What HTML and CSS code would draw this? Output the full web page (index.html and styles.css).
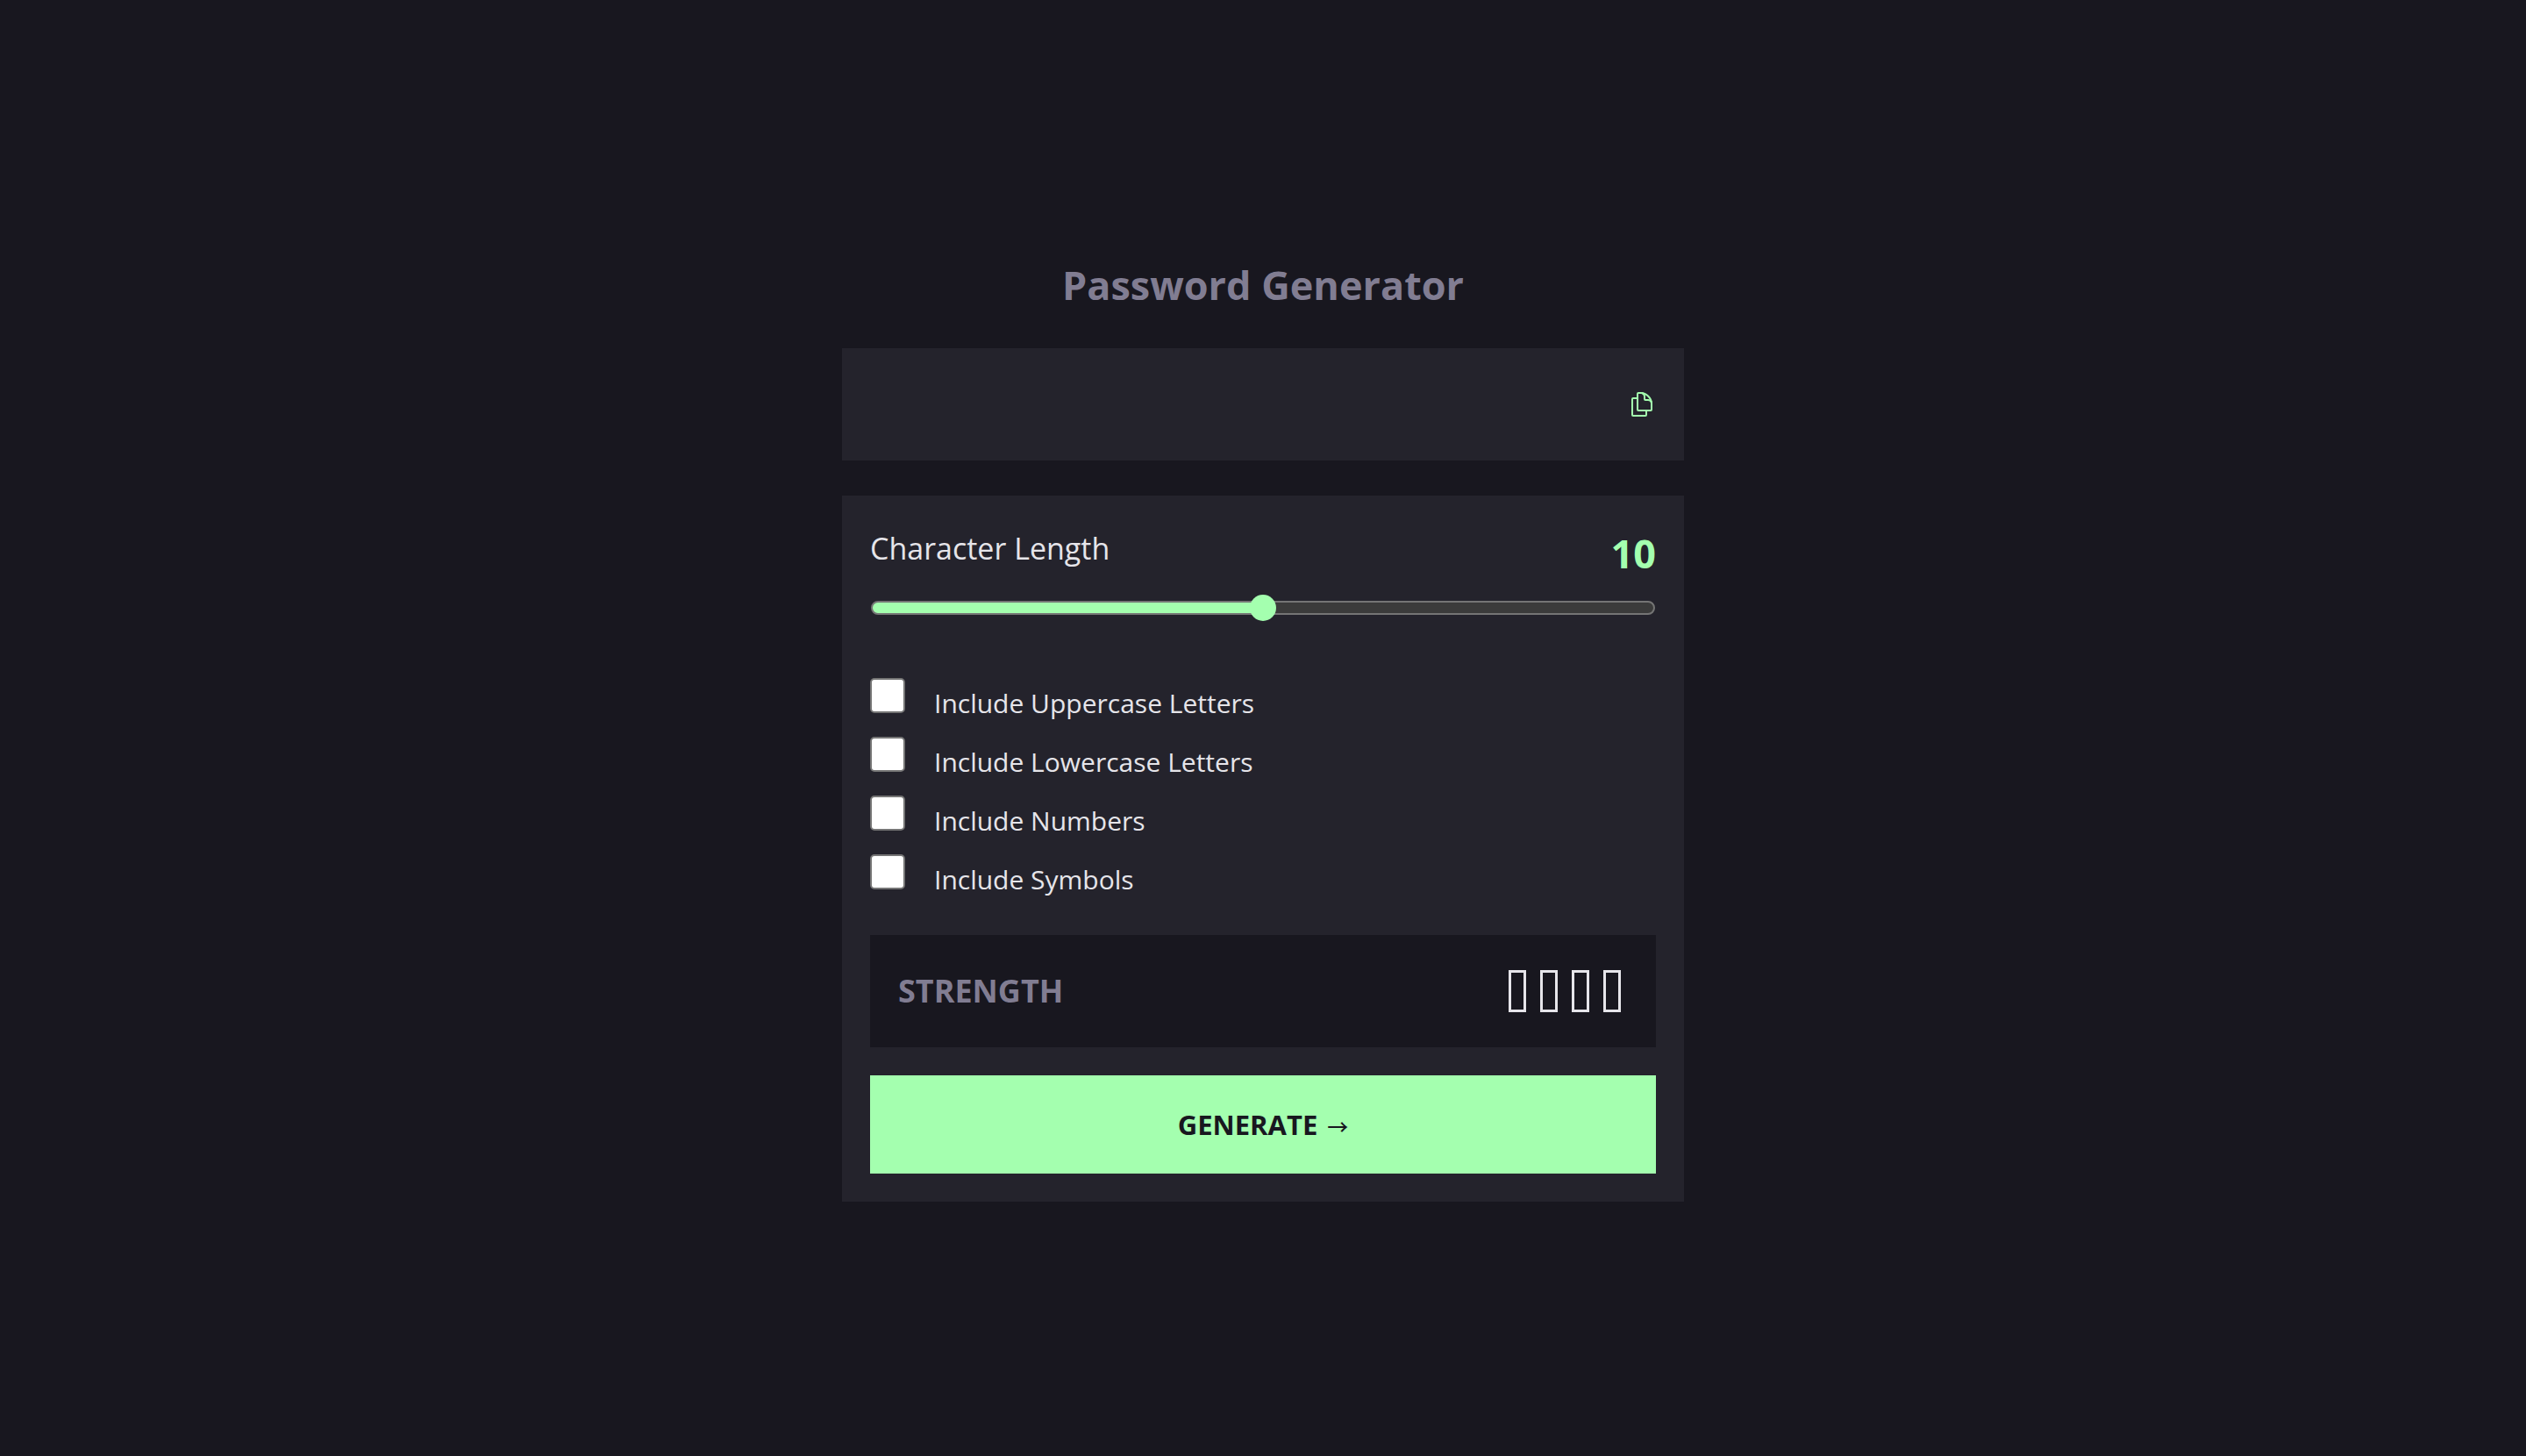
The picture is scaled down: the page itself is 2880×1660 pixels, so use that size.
FILE: index.html
```html
<!DOCTYPE html>
<html lang="en">
<head>
<meta charset="utf-8">
<meta name="viewport" content="width=device-width, initial-scale=1">
<title>Password Generator</title>
<link rel="stylesheet" href="styles.css">
</head>
<body>
<main class="generator">
  <h1 class="title">Password Generator</h1>
  <div class="output">
    <input class="password" type="text" aria-label="Generated password" readonly>
    <button class="copy" type="button" aria-label="Copy password">
      <svg class="copy-icon" viewBox="0 0 24 28" fill="none" stroke="currentColor" stroke-width="2" stroke-linejoin="round" aria-hidden="true">
        <path d="M7 7H2Q1 7 1 8V26Q1 27 2 27H16Q17 27 17 26V21"/>
        <path d="M8 1H11C17 1 23 7 23 13V20Q23 21 22 21H8Q7 21 7 20V2Q7 1 8 1Z"/>
        <path d="M12 1Q15 2 15 5V8Q15 9 16 9H19Q22 9 23 12"/>
      </svg>
    </button>
  </div>
  <form class="card">
    <div class="length-row">
      <label class="length-label" for="length">Character Length</label>
      <output class="length-value" for="length">10</output>
    </div>
    <input class="slider" id="length" type="range" min="0" max="20" value="10">
    <div class="options">
      <label class="option"><input class="tick" type="checkbox"><span class="option-text">Include Uppercase Letters</span></label>
      <label class="option"><input class="tick" type="checkbox"><span class="option-text">Include Lowercase Letters</span></label>
      <label class="option"><input class="tick" type="checkbox"><span class="option-text">Include Numbers</span></label>
      <label class="option"><input class="tick" type="checkbox"><span class="option-text">Include Symbols</span></label>
    </div>
    <div class="strength">
      <span class="strength-label">STRENGTH</span>
      <div class="bars"><span class="bar"></span><span class="bar"></span><span class="bar"></span><span class="bar"></span></div>
    </div>
    <button class="generate" type="button">GENERATE <span class="arrow">→</span></button>
  </form>
</main>
</body>
</html>
```
FILE: styles.css
```css
:root {
  --page: #18171f;
  --panel: #24232c;
  --muted: #817d92;
  --text: #e6e5ea;
  --accent: #a4ffaf;
}

* {
  box-sizing: border-box;
}

body {
  margin: 0;
  min-height: 100vh;
  display: flex;
  align-items: center;
  justify-content: center;
  background: var(--page);
  color: var(--text);
  font-family: "Segoe UI", "Open Sans", sans-serif;
}

.generator {
  width: 100%;
  max-width: 960px;
}

.title {
  margin: 0 0 38px;
  color: var(--muted);
  font-size: 45px;
  line-height: 68px;
  font-weight: 700;
  text-align: center;
}

.output {
  display: flex;
  align-items: center;
  height: 128px;
  margin-bottom: 40px;
  padding: 0 36px 0 32px;
  background: var(--panel);
}

.password {
  flex: 1;
  min-width: 0;
  border: 0;
  background: transparent;
  color: inherit;
  font: inherit;
  font-size: 36px;
}

.copy {
  display: flex;
  padding: 0;
  border: 0;
  background: none;
  color: var(--accent);
}

.copy-icon {
  width: 24px;
  height: 28px;
}

.card {
  padding: 32px;
  background: var(--panel);
}

.length-row {
  display: flex;
  justify-content: space-between;
  height: 72px;
}

.length-label {
  font-size: 34px;
  line-height: 56px;
}

.length-value {
  color: var(--accent);
  font-size: 45px;
  line-height: 68px;
  font-weight: 700;
}

.slider {
  -webkit-appearance: none;
  appearance: none;
  display: block;
  width: 100%;
  height: 32px;
  margin: 8px 0 60px;
  padding: 0 1px;
  background: transparent;
}

.slider::-webkit-slider-runnable-track {
  height: 16px;
  border: 2px solid #757575;
  border-radius: 8px;
  background: linear-gradient(to right, var(--accent) 50%, #3b3b3b 50%);
}

.slider::-webkit-slider-thumb {
  -webkit-appearance: none;
  appearance: none;
  width: 30px;
  height: 30px;
  margin-top: -9px;
  border-radius: 50%;
  background: var(--accent);
}

.options {
  display: grid;
  gap: 11px;
  margin-bottom: 40px;
}

.option {
  display: flex;
  gap: 33px;
  height: 56px;
}

.tick {
  -webkit-appearance: none;
  appearance: none;
  width: 40px;
  height: 40px;
  margin: 4px 0 0;
  border: 2px solid #757575;
  border-radius: 5px;
  background: #fff;
}

.tick:checked {
  background: var(--accent);
}

.option-text {
  padding-top: 10px;
  font-size: 30px;
  line-height: 46px;
}

.strength {
  display: flex;
  align-items: center;
  justify-content: space-between;
  height: 128px;
  margin-bottom: 32px;
  padding: 0 40px 0 32px;
  background: var(--page);
}

.strength-label {
  color: var(--muted);
  font-size: 36px;
  font-weight: 700;
}

.bars {
  display: flex;
  gap: 16px;
}

.bar {
  width: 20px;
  height: 48px;
  border: 3px solid var(--text);
}

.generate {
  display: block;
  width: 100%;
  height: 112px;
  padding: 0;
  border: 0;
  background: var(--accent);
  color: var(--page);
  font: inherit;
  font-size: 31px;
  font-weight: 700;
}

.arrow {
  margin-left: 3px;
  font-family: "Noto Sans CJK SC", sans-serif;
  font-size: 24px;
  font-weight: 500;
}
```
